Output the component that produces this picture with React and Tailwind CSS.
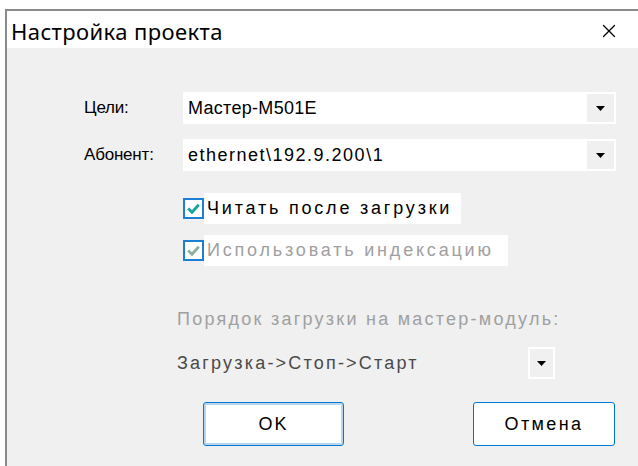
import { X } from 'lucide-react';

const body = { fontFamily: '"Liberation Sans", Arial, sans-serif' };

function Arrow() {
  return (
    <svg width="9" height="5" viewBox="0 0 9 5">
      <path d="M0 0h9L4.5 5z" fill="#000" />
    </svg>
  );
}

function Combo({ value, track }) {
  return (
    <div className="flex h-[32px] bg-white">
      <div className={`flex-1 flex items-center pl-[5px] text-[18px] text-black ${track}`}>{value}</div>
      <div className="w-[31px] flex items-center justify-center bg-[#f0f0f0] border-2 border-white">
        <Arrow />
      </div>
    </div>
  );
}

function Check({ label, disabled }) {
  return (
    <div className="flex items-center">
      <div className="w-[21px] h-[21px] border-2 border-[#1b7fd6] bg-white flex items-center justify-center">
        <svg width="13" height="11" viewBox="0 0 13 11">
          <path
            d="M1.2 5.5l3.8 3.8L11.8 1.8"
            fill="none"
            stroke={disabled ? '#8aaf9e' : '#15a3a3'}
            strokeWidth="2.8"
          />
        </svg>
      </div>
      <span
        className={`bg-white h-[31px] flex items-center pl-[3px] text-[18px] tracking-[2.8px] ${
          disabled ? 'text-[#a0a0a0] w-[304px]' : 'text-black w-[257px]'
        }`}
      >
        {label}
      </span>
    </div>
  );
}

export default function App() {
  return (
    <div className="w-[638px] h-[466px] bg-white overflow-hidden">
      <div className="ml-[5px] mt-[9px] h-[457px] border-l-2 border-t-2 border-[#8a8a8a] flex flex-col">
        <div className="h-[37px] bg-white flex items-center justify-between pl-[4px] pr-[18px] pt-[3px]">
          <span className="text-[22px] tracking-[0.4px] text-black" style={{ fontFamily: '"Noto Sans", "Open Sans", sans-serif' }}>
            Настройка проекта
          </span>
          <X size={22} strokeWidth={1.3} className="text-black" />
        </div>

        <div className="flex-1 bg-[#f0f0f0] pt-[44px] pr-[22px]" style={body}>
          <div className="grid grid-cols-[176px_1fr] gap-y-[15px] items-center">
            <span className="pl-[77px] text-[17px] tracking-[-0.2px] text-black">Цели:</span>
            <Combo value="Мастер-M501E" track="tracking-[0.3px]" />
            <span className="pl-[77px] text-[17px] tracking-[-0.2px] text-black">Абонент:</span>
            <Combo value="ethernet\192.9.200\1" track="tracking-[1.5px]" />
          </div>

          <div className="ml-[176px] mt-[22px] flex flex-col gap-[11px]">
            <Check label="Читать после загрузки" />
            <Check label="Использовать индексацию" disabled />
          </div>

          <div className="ml-[170px] mt-[40px] text-[18px] tracking-[2.25px] text-[#a0a0a0]">
            Порядок загрузки на мастер-модуль:
          </div>

          <div className="ml-[170px] mt-[14px] flex items-center w-[378px] h-[32px]">
            <span className="flex-1 text-[18px] tracking-[2.2px] text-[#4a4a4a]">Загрузка-&gt;Стоп-&gt;Старт</span>
            <div className="w-[27px] h-[32px] flex items-center justify-center border-2 border-white">
              <Arrow />
            </div>
          </div>

          <div className="flex mt-[23px] pl-[196px] gap-[129px]">
            <button className="w-[141px] h-[44px] rounded-[3px] border border-[#0078d7] ring-inset ring-2 ring-[#b8d6f0] bg-white text-[18px] tracking-[2px] text-black">
              OK
            </button>
            <button className="w-[142px] h-[44px] rounded-[3px] border border-[#0078d7] bg-white text-[18px] tracking-[2.4px] text-black">
              Отмена
            </button>
          </div>
        </div>
      </div>
    </div>
  );
}
